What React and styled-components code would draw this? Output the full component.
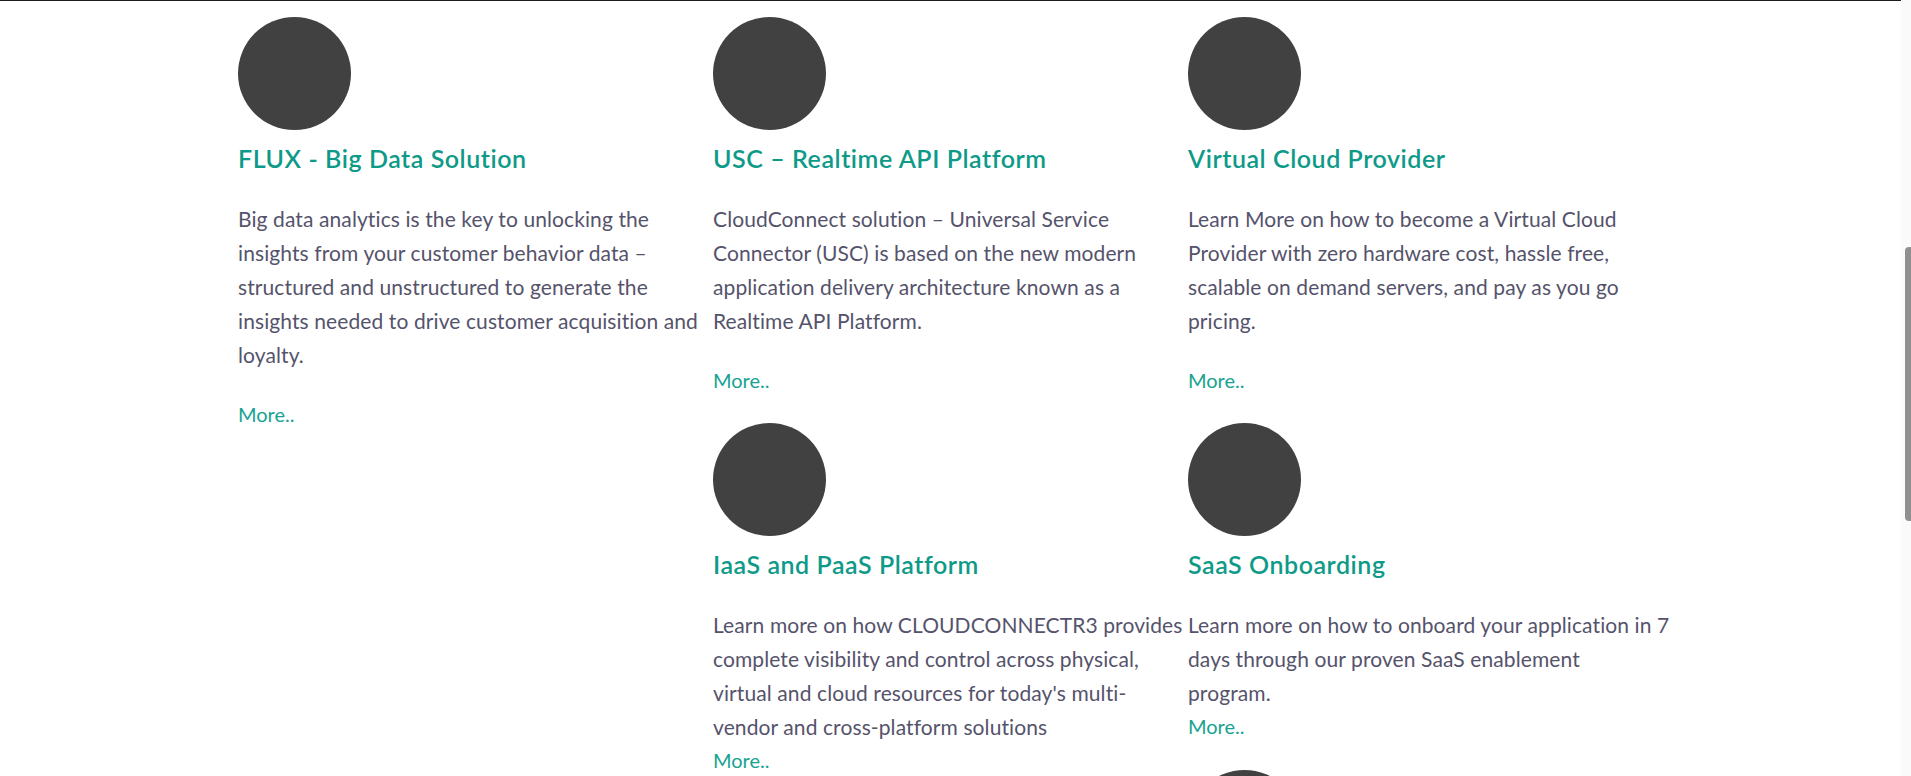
import React from "react";
import styled, { createGlobalStyle } from "styled-components";

const GlobalStyle = createGlobalStyle`
  html, body {
    margin: 0;
    padding: 0;
    background: #ffffff;
    overflow: hidden;
  }
  body {
    font-family: "Lato", "Open Sans", sans-serif;
  }
`;

const Frame = styled.div`
  display: flex;
  height: 100vh;
  width: 100vw;
`;

const Main = styled.main`
  flex: 1;
  min-width: 0;
  border-top: 1px solid #1c1c1c;
  overflow: hidden;
`;

const ScrollTrack = styled.div`
  width: 10px;
  flex: none;
  background: #fafafa;
  display: flex;
  flex-direction: column;
  align-items: flex-end;
  padding-top: 247px;
  box-sizing: border-box;
`;

const ScrollThumb = styled.div`
  width: 6px;
  height: 274px;
  background: #8f8f8f;
  border-radius: 4px 0 0 4px;
`;

const Container = styled.div`
  width: 1425px;
  margin: 0 auto;
  display: grid;
  grid-template-columns: repeat(3, 475px);
  align-items: start;
`;

const Column = styled.div`
  display: flex;
  flex-direction: column;
`;

const Card = styled.article`
  display: flex;
  flex-direction: column;
  align-items: flex-start;
  padding-top: 16px;
  padding-bottom: ${(p) => (p.$tight ? "11px" : "10px")};
`;

const Circle = styled.div`
  width: 113px;
  height: 113px;
  border-radius: 50%;
  background: #414141;
`;

const Title = styled.h3`
  margin: 13px 0 0;
  font-family: "Lato", "Open Sans", sans-serif;
  font-weight: 600;
  font-size: 25px;
  letter-spacing: 0.55px;
  line-height: 30px;
  color: #0e9a88;
  white-space: nowrap;
`;

const Body = styled.p`
  margin: 29px 0 0;
  font-family: "Lato", "Open Sans", sans-serif;
  font-weight: 400;
  font-size: 21px;
  letter-spacing: 0.1px;
  line-height: 34px;
  color: #55536b;
  white-space: nowrap;
`;

const MoreLink = styled.a`
  display: block;
  margin-top: ${(p) => (p.$tight ? "-1px" : "25px")};
  font-family: "Lato", "Open Sans", sans-serif;
  font-weight: 400;
  font-size: 20px;
  line-height: 34px;
  color: #16a290;
  text-decoration: none;
`;

const cards = {
  flux: {
    title: "FLUX - Big Data Solution",
    lines: [
      "Big data analytics is the key to unlocking the",
      "insights from your customer behavior data –",
      "structured and unstructured to generate the",
      "insights needed to drive customer acquisition and",
      "loyalty.",
    ],
  },
  usc: {
    title: "USC – Realtime API Platform",
    lines: [
      "CloudConnect solution – Universal Service",
      "Connector (USC) is based on the new modern",
      "application delivery architecture known as a",
      "Realtime API Platform.",
    ],
  },
  vcp: {
    title: "Virtual Cloud Provider",
    lines: [
      "Learn More on how to become a Virtual Cloud",
      "Provider with zero hardware cost, hassle free,",
      "scalable on demand servers, and pay as you go",
      "pricing.",
    ],
  },
  iaas: {
    title: "IaaS and PaaS Platform",
    tight: true,
    lines: [
      "Learn more on how CLOUDCONNECTR3 provides",
      "complete visibility and control across physical,",
      "virtual and cloud resources for today's multi-",
      "vendor and cross-platform solutions",
    ],
  },
  saas: {
    title: "SaaS Onboarding",
    tight: true,
    lines: [
      "Learn more on how to onboard your application in 7",
      "days through our proven SaaS enablement",
      "program.",
    ],
  },
};

function ServiceCard({ data }) {
  return (
    <Card $tight={data.tight}>
      <Circle />
      <Title>{data.title}</Title>
      <Body>
        {data.lines.map((l, i) => (
          <React.Fragment key={i}>
            {i > 0 && <br />}
            {l}
          </React.Fragment>
        ))}
      </Body>
      <MoreLink href="#" $tight={data.tight}>
        More..
      </MoreLink>
    </Card>
  );
}

export default function App() {
  return (
    <>
      <GlobalStyle />
      <Frame>
        <Main>
          <Container>
            <Column>
              <ServiceCard data={cards.flux} />
            </Column>
            <Column>
              <ServiceCard data={cards.usc} />
              <ServiceCard data={cards.iaas} />
            </Column>
            <Column>
              <ServiceCard data={cards.vcp} />
              <ServiceCard data={cards.saas} />
              <Card>
                <Circle />
              </Card>
            </Column>
          </Container>
        </Main>
        <ScrollTrack>
          <ScrollThumb />
        </ScrollTrack>
      </Frame>
    </>
  );
}
